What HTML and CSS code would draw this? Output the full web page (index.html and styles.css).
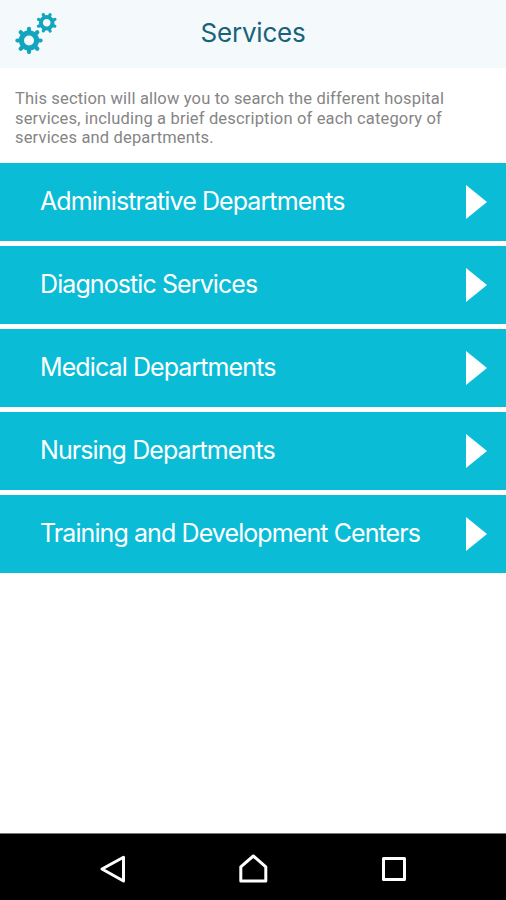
FILE: index.html
```
<!DOCTYPE html>
<html lang="en">

<head>
    <meta charset="UTF-8">
    <meta name="viewport" content="width=device-width, initial-scale=1.0">
    <title>Services</title>
    <link rel="stylesheet" href="styles.css">
</head>

<body>
    <!-- header -->
    <header class="header">
        <svg class="gears" viewBox="0 0 44 44">
            <g transform="translate(15 28.5)">
                <circle class="gear-ring" r="7.6" />
                <path class="gear-teeth" d="M0-10V-11.6M0 10V11.6M-10 0H-11.6M10 0H11.6M7-7L8.3-8.3M-7-7L-8.3-8.3M7 7L8.3 8.3M-7 7L-8.3 8.3" />
            </g>
            <g transform="translate(32.7 10.8) rotate(22.5) scale(.76)">
                <circle class="gear-ring" r="7.6" />
                <path class="gear-teeth" d="M0-10V-11.6M0 10V11.6M-10 0H-11.6M10 0H11.6M7-7L8.3-8.3M-7-7L-8.3-8.3M7 7L8.3 8.3M-7 7L-8.3 8.3" />
            </g>
        </svg>
        <h1 class="title">Services</h1>
    </header>

    <!-- description and list -->
    <main class="content">
        <p class="intro">This section will allow you to search the different hospital<br>
            services, including a brief description of each category of<br>
            services and departments.</p>

        <ul class="menu">
            <li class="menu-item"><span>Administrative Departments</span><i class="arrow"></i></li>
            <li class="menu-item"><span>Diagnostic Services</span><i class="arrow"></i></li>
            <li class="menu-item"><span>Medical Departments</span><i class="arrow"></i></li>
            <li class="menu-item"><span>Nursing Departments</span><i class="arrow"></i></li>
            <li class="menu-item"><span>Training and Development Centers</span><i class="arrow"></i></li>
        </ul>
    </main>

    <!-- phone buttons -->
    <footer class="navbar">
        <svg class="nav-icon" viewBox="0 0 32 32">
            <path d="M27.5 4.2V28L6 16Z" />
        </svg>
        <svg class="nav-icon" viewBox="0 0 32 32">
            <path d="M3.8 28V13.8L16.3 3L28.8 13.8V28Z" />
        </svg>
        <svg class="nav-icon" viewBox="0 0 32 32">
            <path d="M5.5 5.5H26.5V26.5H5.5Z" />
        </svg>
    </footer>
</body>

</html>
```
FILE: styles.css
```
* {
    box-sizing: border-box;
}

body {
    margin: 0;
    height: 100vh;
    display: flex;
    flex-direction: column;
    background: #fff;
    font-family: Inter, "Liberation Sans", sans-serif;
}

.header {
    height: 68px;
    padding: 0 14px;
    display: grid;
    grid-template-columns: 44px 1fr 44px;
    background: #f4f9fb;
}

.gears {
    width: 44px;
    height: 44px;
    margin-top: 12px;
}

.gear-ring {
    fill: none;
    stroke: #12a5bd;
    stroke-width: 5.2;
}

.gear-teeth {
    fill: none;
    stroke: #12a5bd;
    stroke-width: 4.2;
    stroke-linecap: round;
}

.title {
    margin: 0;
    font-size: 26px;
    font-weight: 400;
    line-height: 66px;
    letter-spacing: -0.2px;
    text-align: center;
    color: #17637a;
}

.content {
    flex: 1;
}

.intro {
    height: 95px;
    margin: 0;
    padding: 21px 15px 0;
    font-family: Roboto, sans-serif;
    font-size: 16.5px;
    line-height: 19.7px;
    letter-spacing: 0.16px;
    white-space: nowrap;
    color: #858585;
}

.menu {
    margin: 0;
    padding: 0;
    list-style: none;
    display: flex;
    flex-direction: column;
    gap: 5px;
}

.menu-item {
    height: 78px;
    padding: 0 19px 0 40px;
    display: flex;
    align-items: center;
    justify-content: space-between;
    background: #0bbcd6;
    color: #fff;
    font-size: 25px;
    letter-spacing: -0.91px;
    white-space: nowrap;
}

.menu-item span {
    padding-bottom: 2px;
}

.arrow {
    width: 21px;
    height: 34px;
    background: #fff;
    clip-path: polygon(0 0, 100% 50%, 0 100%);
}

.navbar {
    height: 67px;
    padding: 4px 96px 0;
    display: flex;
    align-items: center;
    justify-content: space-between;
    background: #000;
    border-top: 1px solid #777;
}

.nav-icon {
    width: 32px;
    height: 32px;
    fill: none;
    stroke: #fff;
    stroke-width: 3;
    stroke-linejoin: round;
}
```
